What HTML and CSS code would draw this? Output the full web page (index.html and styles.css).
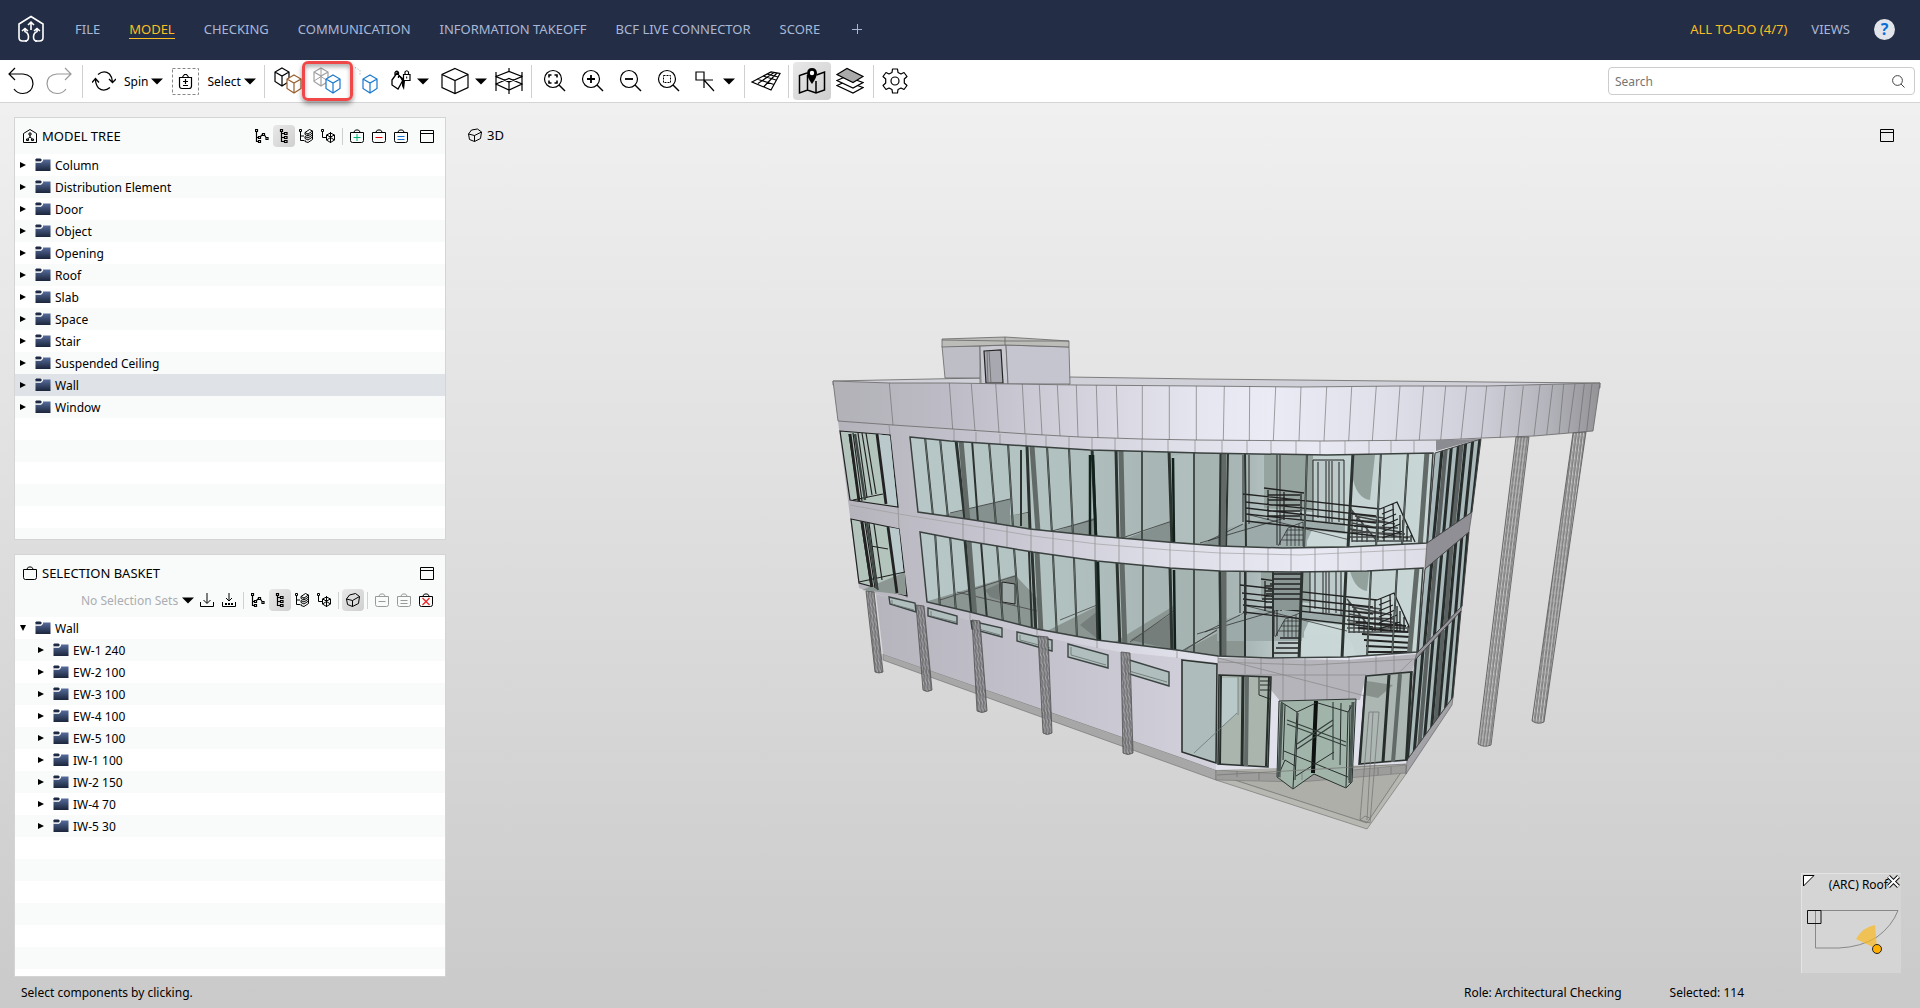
FILE: index.html
```html
<!DOCTYPE html>
<html lang="en">
<head>
    <meta charset="UTF-8">
    <meta name="viewport" content="width=device-width, initial-scale=1.0">
    <title>Model Viewer</title>
    <link rel="stylesheet" href="styles.css">
</head>
<body>
    <!-- Shared icons -->
    <svg class="sprite" aria-hidden="true">
        <defs>
            <linearGradient id="folderFill" x1="0" y1="0" x2="0" y2="1">
                <stop offset="0" stop-color="#566c9c"/>
                <stop offset="1" stop-color="#1b253b"/>
            </linearGradient>
        </defs>
        <symbol id="i-folder" viewBox="0 0 16 14">
            <path d="M.5 4.500H6.500L8 2.500V1.500H15.500V13H.5z" fill="url(#folderFill)"/>
            <path d="M.5 3.500V1.200L1.200.5H5.500L6.500 1.500V2.800L5.700 3.500z" fill="#1d2944"/>
            <path d="M.5 4.200H6L7.500 2.700V1" fill="none" stroke="#fff" stroke-width=".9"/>
        </symbol>
        <symbol id="i-right" viewBox="0 0 6 8"><path d="M0 1L6 4L0 7z"/></symbol>
        <symbol id="i-open" viewBox="0 0 6 8"><path d="M0 1H6L3 7z"/></symbol>
        <symbol id="i-caret" viewBox="0 0 12 7"><path d="M0 .5H12L6 6.500z"/></symbol>
        <symbol id="i-window" viewBox="0 0 14 14">
            <path d="M.5 1.500H13.500V13.500H.5zM.5 4.500H13.500" fill="none" stroke="#000"/>
        </symbol>
        <symbol id="i-tree1" viewBox="0 0 14 14">
            <path d="M1.500 3V12.500H4M1.500 8.500H4M5.500 7.500L7.500 5.500M9.500 6L11 8.500M.5.500h2v2h-2zM3.500 7.500h2v2h-2zM3.500 11.500h2v2h-2zM7.500 4.500h2v2h-2zM11 8.500h2v2h-2z" fill="none" stroke="#000" stroke-width="1.200"/>
        </symbol>
        <symbol id="i-tree2" viewBox="0 0 14 14">
            <path d="M4.500 3V12.500H7M4.500 4.500H7M4.500 8.500H7M3.500.500h2v2h-2zM7.500 3.500h2.500v2h-2.500zM7.500 7.500h2.500v2h-2.500zM7.500 11.500h2.500v2h-2.500z" fill="none" stroke="#000" stroke-width="1.200"/>
        </symbol>
        <symbol id="i-tree3" viewBox="0 0 14 14">
            <path d="M1.500 3V11.500H5M1.500 7H5M.5.500h2v2h-2zM6 3.500L10.500.5L13.500 2L9 5zM6 3.500V5.500L9 7L13.500 4V2M9 5V7M6 7.500L9 9L13.500 6V4M6 7.500V9.500L9 11L13.500 8V6M6 11V12.500L9 13.500L13.500 10.500V8" fill="none" stroke="#000"/>
        </symbol>
        <symbol id="i-tree4" viewBox="0 0 14 14">
            <path d="M1.500 3V8.500H5M.5.500h2v2h-2zM5.500 6L9.500 4L13.500 6V11L9.500 13.500L5.500 11zM5.500 6L9.500 8L13.500 6M9.500 3V14M5.500 11L9.500 8.500L13.500 11" fill="none" stroke="#000"/>
        </symbol>
        <symbol id="i-basket" viewBox="0 0 14 14">
            <path d="M.5 3.500H13.500V11.500Q13.500 13.500 11.500 13.500H2.500Q.5 13.500 .5 11.500zM3.500 3.500L5.500 1H8.500L10.500 3.500" fill="none" stroke="currentColor"/>
        </symbol>
        <symbol id="i-lens" viewBox="0 0 24 24">
            <circle cx="10" cy="10" r="8.500" fill="none" stroke="#000" stroke-width="1.200"/>
            <path d="M16 16L22 22" stroke="#000" stroke-width="1.400"/>
        </symbol>
        <symbol id="i-cube" viewBox="0 0 16 20">
            <path d="M8 1L15 5V14.500L8 19L1 14.500V5zM1 5L8 9L15 5M8 9V19" fill="none" stroke="currentColor" stroke-width="1.200"/>
        </symbol>
    </svg>

    <header class="menubar">
        <a href="#" class="logo" aria-label="Home">
            <svg width="28" height="28" viewBox="0 0 28 28" fill="none" stroke="#fff" stroke-width="1.600">
                <path d="M10 26H5.500Q2 26 2 22.500V9L14 1.500L26 9V22.500Q26 26 22.500 26H18"/>
                <path d="M14 8V15M11 10L14 7.200L17 10" />
                <path d="M8 13V16.500Q11.500 18 11.500 22Q11.500 26 8 26M5 16L8 13.500L11 16M20 13V16.500Q16.500 18 16.500 22Q16.500 26 20 26M17 16L20 13.500L23 16"/>
            </svg>
        </a>
        <nav class="menu">
            <a href="#">FILE</a>
            <a href="#" class="current">MODEL</a>
            <a href="#">CHECKING</a>
            <a href="#">COMMUNICATION</a>
            <a href="#">INFORMATION TAKEOFF</a>
            <a href="#">BCF LIVE CONNECTOR</a>
            <a href="#">SCORE</a>
        </nav>
        <button class="add-view" aria-label="Add layout">
            <svg width="10" height="10"><path d="M0 5.500H10M5.500 0V10" stroke="#a9b7d6"/></svg>
        </button>
        <nav class="menu menu-right">
            <a href="#" class="todo">ALL TO-DO (4/7)</a>
            <a href="#">VIEWS</a>
        </nav>
        <button class="help" aria-label="Help">?</button>
    </header>

    <div class="toolbar">
        <button class="tool" aria-label="Undo">
            <svg width="26" height="28" viewBox="0 0 26 28" fill="none" stroke="#000" stroke-width="1.200"><path d="M7 1L1 7L7 13M1 7H15Q25 8 25 17Q24 26 15 26.500Q9 26.500 6 22"/></svg>
        </button>
        <button class="tool" aria-label="Redo" disabled>
            <svg width="26" height="28" viewBox="0 0 26 28" fill="none" stroke="#999" stroke-width="1.200"><path d="M19 1L25 7L19 13M25 7H11Q1 8 1 17Q2 26 11 26.500Q17 26.500 20 22"/></svg>
        </button>
        <span class="sep"></span>
        <button class="tool-text">
            <svg width="24" height="24" viewBox="0 0 24 24" fill="none" stroke="#000" stroke-width="1.300"><path d="M6 5.500Q12 .5 17.500 5Q20.500 8.500 20.500 13M17 10L20.500 13.500L24 10M18 18.500Q12 23.500 6.500 19Q3.500 15.500 3.500 10M0 13.500L3.500 9.500L7 13.500"/></svg>
            <span>Spin</span>
            <svg width="12" height="7"><use href="#i-caret"/></svg>
        </button>
        <button class="tool-text">
            <svg width="27" height="27" viewBox="0 0 27 27" fill="none"><path d="M.5.500H26.500V26.500H.5z" stroke="#888" stroke-dasharray="3 2"/><path d="M7.500 9.500H19.500V18Q19.500 20.500 17 20.500H10Q7.500 20.500 7.500 18zM10.500 9L12.500 6.500H14.500L16.500 9M13.500 11V16M11 13.500H16M11 17.500H16" stroke="#000" stroke-width="1.200"/></svg>
            <span>Select</span>
            <svg width="12" height="7"><use href="#i-caret"/></svg>
        </button>
        <span class="sep"></span>
        <button class="tool cubes" aria-label="Show all">
            <svg width="30" height="28"><use href="#i-cube" x="1" y="0" width="16" height="20"/><path d="M14 13L21 7.500L29 12V23L21 28L14 23z" fill="#fff"/><use href="#i-cube" x="13" y="7" width="16" height="20" color="#9a5f2c"/></svg>
        </button>
        <button class="tool cubes marked" aria-label="Transparent">
            <svg width="30" height="28"><g color="#a0a0a0"><use href="#i-cube" x="1" y="0" width="16" height="20"/><path d="M9 1V10M2 14L9 9.500L16 14" fill="none" stroke="#a0a0a0"/></g><path d="M14 13L21 8L29 12V23L21 28L14 23z" fill="#fff"/><use href="#i-cube" x="13" y="7" width="16" height="20" color="#1878d0"/></svg>
        </button>
        <button class="tool cubes" aria-label="Show only selected">
            <svg width="30" height="28"><path d="M1 1L4 .5L9 3V9" fill="none" stroke="#999" stroke-dasharray="1 2"/><use href="#i-cube" x="11" y="7" width="16" height="20" color="#1878d0"/></svg>
        </button>
        <button class="tool-caret" aria-label="Colour">
            <svg width="20" height="24" viewBox="0 0 20 24"><path d="M1 11L6 4L12 11L7 20L1 16zM4 8V3.500Q5.500 1 7.500 3.500V9" fill="none" stroke="#000" stroke-width="1.300"/><path d="M8 6L12 9L14 12L13 21L11 17V12z"/><path d="M12.500 5.500H19V11.500H12.500zM14 5V3Q15.700.500 17.500 3V5" fill="#fff" stroke="#000" stroke-width="1.200"/><path d="M15.700 7.500V9.500" stroke="#000"/></svg>
            <svg width="12" height="7"><use href="#i-caret"/></svg>
        </button>
        <button class="tool-caret view-dir" aria-label="View direction">
            <svg width="28" height="28" viewBox="0 0 28 28" fill="none" stroke="#000" stroke-width="1.200"><path d="M14 1.500L27 7.500V20.500L14 26.500L1 20.500V7.500zM1 7.500L14 13.500L27 7.500M14 13.500V26.500"/></svg>
            <svg width="12" height="7"><use href="#i-caret"/></svg>
        </button>
        <button class="tool grid-tool" aria-label="Sectioning">
            <svg width="28" height="28" viewBox="0 0 28 28" fill="none" stroke="#000" stroke-width="1.200"><path d="M1 5V24M27 5V24M14 1V5M14 14V27M1 9.500L14 4.500L27 9.500L14 15zM1 17L14 11.500L27 17L14 23z"/></svg>
        </button>
        <span class="sep"></span>
        <button class="tool" aria-label="Zoom to fit">
            <svg width="24" height="24"><use href="#i-lens"/><path d="M6 8.500V6H8.500M11.500 6H14V8.500M14 11.500V14H11.500M8.500 14H6V11.500" fill="none" stroke="#000" stroke-width="1.600"/></svg>
        </button>
        <button class="tool" aria-label="Zoom in">
            <svg width="24" height="24"><use href="#i-lens"/><path d="M6 10H14M10 6V14" stroke="#000" stroke-width="1.800"/></svg>
        </button>
        <button class="tool" aria-label="Zoom out">
            <svg width="24" height="24"><use href="#i-lens"/><path d="M6 10H14" stroke="#000" stroke-width="1.800"/></svg>
        </button>
        <button class="tool" aria-label="Zoom to area">
            <svg width="24" height="24"><use href="#i-lens"/><path d="M6.500 6.500H13.500V13.500H6.500z" fill="none" stroke="#000" stroke-dasharray="2 1"/></svg>
        </button>
        <button class="tool-caret" aria-label="Snap">
            <svg width="24" height="22" viewBox="0 0 24 22" fill="none" stroke="#000" stroke-width="1.200"><path d="M3 2H11V10H3zM3 10H20M11 2V18M11 10L21 21"/></svg>
            <svg width="12" height="7"><use href="#i-caret"/></svg>
        </button>
        <span class="sep"></span>
        <button class="tool grid-tool" aria-label="Grid">
            <svg width="30" height="20" viewBox="0 0 30 20" fill="none" stroke="#000" stroke-width="1.200"><path d="M1 11L20 1L29 2.500L20 19zM6 8L23 13.500M12 5L25 9M16 3L27 6M7 12.500L23 1.500M13 15.500L26 2"/></svg>
        </button>
        <span class="sep"></span>
        <button class="tool active" aria-label="Map">
            <svg width="28" height="28" viewBox="0 0 28 28" fill="none" stroke="#000" stroke-width="1.500"><path d="M9 6L1.500 8.500V26L9.500 23L18 26L26.500 23V5L18.500 8M9.500 8V23M18 14V26"/><path d="M14 17Q9 10 9 6Q9.500 1 14 1Q18.500 1 19 6Q19 10 14 17z" fill="#000" stroke="none"/><circle cx="14" cy="6" r="2.200" fill="#fff" stroke="none"/></svg>
        </button>
        <button class="tool" aria-label="Floors">
            <svg width="28" height="28" viewBox="0 0 28 28" fill="#fff" stroke="#000" stroke-width="1.200"><path d="M1 18.500L10 14.500L27 20.500L17 26z"/><path d="M1 13.500L10 9.500L27 15.500L17 21z"/><path d="M1 7.500L11 1.500L27 9.500L17 15.500z" fill="#aaa"/></svg>
        </button>
        <span class="sep"></span>
        <button class="tool grid-tool" aria-label="Settings">
            <svg width="26" height="26" viewBox="0 0 26 26" fill="none" stroke="#000" stroke-width="1.200"><path d="M10.500 1H15.500L16 4.500L19 6L22 4.500L25 8.500L22.300 11V15L25 17.500L22 21.500L19 20L16 21.500L15.500 25H10.500L10 21.500L7 20L4 21.500L1 17.500L3.700 15V11L1 8.500L4 4.500L7 6L10 4.500z" stroke-linejoin="round"/><circle cx="13" cy="13" r="4"/></svg>
        </button>
        <div class="search">
            <input type="search" id="search" placeholder="Search" aria-label="Search">
            <label for="search" aria-hidden="true">
                <svg width="13" height="13" viewBox="0 0 13 13" fill="none" stroke="#444"><circle cx="5.500" cy="5.500" r="4.900"/><path d="M9 9L12.500 12.500"/></svg>
            </label>
        </div>
    </div>

    <main class="workspace">
        <aside class="sidebar">
            <section class="panel">
                <div class="panel-head">
                    <svg width="14" height="14" viewBox="0 0 14 14" fill="none" stroke="#000"><path d="M.5 4.500L7 .500L13.500 4.500V13.500H.5zM6 4h2v2h-2zM3.500 10h2v1.500h-2zM8.500 10h2v1.500h-2zM7 6V8L4.500 10M7 8L9.500 10"/></svg>
                    <h2>MODEL TREE</h2>
                    <div class="panel-tools">
                        <button class="mini" aria-label="Containment"><svg><use href="#i-tree1"/></svg></button>
                        <button class="mini active" aria-label="Type"><svg><use href="#i-tree2"/></svg></button>
                        <button class="mini" aria-label="Layer"><svg><use href="#i-tree3"/></svg></button>
                        <button class="mini" aria-label="Component"><svg><use href="#i-tree4"/></svg></button>
                        <span class="mini-sep"></span>
                        <button class="mini" aria-label="Add to basket"><svg><use href="#i-basket"/><path d="M7 5V12M3.500 8.500H10.500" stroke="#00b070"/></svg></button>
                        <button class="mini" aria-label="Remove from basket"><svg><use href="#i-basket"/><path d="M3.500 8.500H10.500" stroke="#e00000"/></svg></button>
                        <button class="mini" aria-label="Set basket"><svg><use href="#i-basket"/><path d="M3.500 7.500H10.500M3.500 10.500H10.500" stroke="#1070d0"/></svg></button>
                        <button class="mini maximize" aria-label="Maximize"><svg><use href="#i-window"/></svg></button>
                    </div>
                </div>
                <ul class="tree">
                    <li><button aria-label="Expand"><svg><use href="#i-right"/></svg></button><svg class="folder"><use href="#i-folder"/></svg>Column</li>
                    <li><button aria-label="Expand"><svg><use href="#i-right"/></svg></button><svg class="folder"><use href="#i-folder"/></svg>Distribution Element</li>
                    <li><button aria-label="Expand"><svg><use href="#i-right"/></svg></button><svg class="folder"><use href="#i-folder"/></svg>Door</li>
                    <li><button aria-label="Expand"><svg><use href="#i-right"/></svg></button><svg class="folder"><use href="#i-folder"/></svg>Object</li>
                    <li><button aria-label="Expand"><svg><use href="#i-right"/></svg></button><svg class="folder"><use href="#i-folder"/></svg>Opening</li>
                    <li><button aria-label="Expand"><svg><use href="#i-right"/></svg></button><svg class="folder"><use href="#i-folder"/></svg>Roof</li>
                    <li><button aria-label="Expand"><svg><use href="#i-right"/></svg></button><svg class="folder"><use href="#i-folder"/></svg>Slab</li>
                    <li><button aria-label="Expand"><svg><use href="#i-right"/></svg></button><svg class="folder"><use href="#i-folder"/></svg>Space</li>
                    <li><button aria-label="Expand"><svg><use href="#i-right"/></svg></button><svg class="folder"><use href="#i-folder"/></svg>Stair</li>
                    <li><button aria-label="Expand"><svg><use href="#i-right"/></svg></button><svg class="folder"><use href="#i-folder"/></svg>Suspended Ceiling</li>
                    <li class="selected"><button aria-label="Expand"><svg><use href="#i-right"/></svg></button><svg class="folder"><use href="#i-folder"/></svg>Wall</li>
                    <li><button aria-label="Expand"><svg><use href="#i-right"/></svg></button><svg class="folder"><use href="#i-folder"/></svg>Window</li>
                </ul>
            </section>

            <section class="panel">
                <div class="panel-head basket-head">
                    <svg width="14" height="14"><use href="#i-basket"/></svg>
                    <h2>SELECTION BASKET</h2>
                    <div class="panel-tools">
                        <button class="mini maximize" aria-label="Maximize"><svg><use href="#i-window"/></svg></button>
                    </div>
                </div>
                <div class="basket-tools">
                    <select aria-label="Selection sets"><option>No Selection Sets</option></select>
                    <svg class="set-caret"><use href="#i-caret"/></svg>
                    <button class="mini" aria-label="Load set"><svg fill="none" stroke="#000"><path d="M.5 9V13.500H13.500V9M7 0V10M3.500 7L7 10.500L10.500 7"/></svg></button>
                    <button class="mini" aria-label="Save set"><svg fill="none" stroke="#000"><path d="M.5 9V13.500H13.500V9M7 0V8M4 5L7 8L10 5"/><path d="M3 11H11" stroke-width="2" stroke-dasharray="2 1"/></svg></button>
                    <span class="mini-sep"></span>
                    <button class="mini" aria-label="Containment"><svg><use href="#i-tree1"/></svg></button>
                    <button class="mini active" aria-label="Type"><svg><use href="#i-tree2"/></svg></button>
                    <button class="mini" aria-label="Layer"><svg><use href="#i-tree3"/></svg></button>
                    <button class="mini" aria-label="Component"><svg><use href="#i-tree4"/></svg></button>
                    <span class="mini-sep"></span>
                    <button class="mini active" aria-label="Show in 3D"><svg fill="none" stroke="#000"><path d="M.5 6L3.500 2L9.500.5L13.500 3.500L12.500 10.500L6.500 13.500L1.500 11.500zM.5 6L6.500 7.500L13.500 3.500M6.500 7.500V13.500"/></svg></button>
                    <span class="mini-sep"></span>
                    <button class="mini" aria-label="Remove" disabled><svg><use href="#i-basket"/><path d="M3.500 8.500H10.500" stroke="#999"/></svg></button>
                    <button class="mini" aria-label="Set" disabled><svg><use href="#i-basket"/><path d="M3.500 7.500H10.500M3.500 10.500H10.500" stroke="#999"/></svg></button>
                    <button class="mini" aria-label="Clear"><svg><use href="#i-basket"/><path d="M3.500 5L10.500 12M10.500 5L3.500 12" stroke="#f02020" stroke-width="1.200"/></svg></button>
                </div>
                <ul class="tree">
                    <li><button aria-label="Collapse"><svg><use href="#i-open"/></svg></button><svg class="folder"><use href="#i-folder"/></svg>Wall</li>
                    <li class="child"><button aria-label="Expand"><svg><use href="#i-right"/></svg></button><svg class="folder"><use href="#i-folder"/></svg>EW-1 240</li>
                    <li class="child"><button aria-label="Expand"><svg><use href="#i-right"/></svg></button><svg class="folder"><use href="#i-folder"/></svg>EW-2 100</li>
                    <li class="child"><button aria-label="Expand"><svg><use href="#i-right"/></svg></button><svg class="folder"><use href="#i-folder"/></svg>EW-3 100</li>
                    <li class="child"><button aria-label="Expand"><svg><use href="#i-right"/></svg></button><svg class="folder"><use href="#i-folder"/></svg>EW-4 100</li>
                    <li class="child"><button aria-label="Expand"><svg><use href="#i-right"/></svg></button><svg class="folder"><use href="#i-folder"/></svg>EW-5 100</li>
                    <li class="child"><button aria-label="Expand"><svg><use href="#i-right"/></svg></button><svg class="folder"><use href="#i-folder"/></svg>IW-1 100</li>
                    <li class="child"><button aria-label="Expand"><svg><use href="#i-right"/></svg></button><svg class="folder"><use href="#i-folder"/></svg>IW-2 150</li>
                    <li class="child"><button aria-label="Expand"><svg><use href="#i-right"/></svg></button><svg class="folder"><use href="#i-folder"/></svg>IW-4 70</li>
                    <li class="child"><button aria-label="Expand"><svg><use href="#i-right"/></svg></button><svg class="folder"><use href="#i-folder"/></svg>IW-5 30</li>
                </ul>
            </section>
        </aside>

        <section class="viewport">
            <svg class="building" viewBox="446 103 1474 874" role="img" aria-label="3D model of the building">
                <defs>
                    <linearGradient id="parapet" gradientUnits="userSpaceOnUse" x1="833" y1="0" x2="1600" y2="0">
                        <stop offset="0" stop-color="#b1b1b7"/><stop offset=".15" stop-color="#bdbcc6"/>
                        <stop offset=".32" stop-color="#d3d2dc"/><stop offset=".48" stop-color="#e6e6f0"/>
                        <stop offset=".57" stop-color="#ebebf5"/><stop offset=".72" stop-color="#e0e0ea"/>
                        <stop offset=".85" stop-color="#cdcdd7"/><stop offset=".93" stop-color="#b4b4bc"/>
                        <stop offset="1" stop-color="#939397"/>
                    </linearGradient>
                    <linearGradient id="body" gradientUnits="userSpaceOnUse" x1="838" y1="0" x2="1436" y2="0">
                        <stop offset="0" stop-color="#b4b3bb"/><stop offset=".3" stop-color="#c9c8d3"/>
                        <stop offset=".55" stop-color="#dedee8"/><stop offset=".8" stop-color="#e9e9f3"/>
                        <stop offset="1" stop-color="#dcdce6"/>
                    </linearGradient>
                    <linearGradient id="lower" gradientUnits="userSpaceOnUse" x1="876" y1="0" x2="1218" y2="0">
                        <stop offset="0" stop-color="#b6b5be"/><stop offset="1" stop-color="#d2d1dc"/>
                    </linearGradient>
                    <linearGradient id="glass" gradientUnits="userSpaceOnUse" x1="910" y1="0" x2="1430" y2="0">
                        <stop offset="0" stop-color="#b8c8c8"/><stop offset=".3" stop-color="#b1c1bf"/>
                        <stop offset=".55" stop-color="#a4b2b0"/><stop offset=".65" stop-color="#a9b8b6"/>
                        <stop offset=".75" stop-color="#c3d1d1"/><stop offset="1" stop-color="#c8d6d6"/>
                    </linearGradient>
                    <pattern id="mesh" width="3" height="8" patternUnits="userSpaceOnUse" patternTransform="rotate(7)">
                        <rect width="3" height="8" fill="#c4c4c4"/><path d="M.5 0V8M2 0L3 8" stroke="#555" stroke-width=".6"/>
                    </pattern>
                    <pattern id="meshLeft" width="3" height="8" patternUnits="userSpaceOnUse" patternTransform="rotate(-5)">
                        <rect width="3" height="8" fill="#a3a3a8"/><path d="M.5 0V8M1 0L3 8" stroke="#444" stroke-width=".6"/>
                    </pattern>
                    <clipPath id="upperGlass"><path d="M910 437L950 441L1027 446L1090 450L1167 452L1200 453L1327 455L1433 453L1427 543L1347 547L1283 548L1220 546L1167 542L1097 536L1030 529L967 519L918 512z"/></clipPath>
                    <clipPath id="midGlass"><path d="M920 532L967 541L1033 552L1097 561L1170 568L1220 571L1293 572L1367 571L1423 568L1417 652L1347 657L1270 658L1218 656L1177 650L1097 640L1037 629L970 612L927 602z"/></clipPath>
                    <clipPath id="side1"><path d="M1435 453L1481 439L1472 512L1427 543z"/></clipPath>
                    <clipPath id="side2"><path d="M1425 569L1469 532L1462 606L1417 653z"/></clipPath>
                    <clipPath id="side3"><path d="M1415 660L1461 611L1453 697L1407 760z"/></clipPath>
                    <!-- Stair and railings seen through the glass, one per floor -->
                    <g id="stair" fill="none" stroke="#222" stroke-width="1">
                        <path d="M1264 455H1313V512L1264 508z" fill="#96a4a0" stroke="none"/>
                        <path d="M1353 455H1375L1370 500Q1356 498 1352 475z" fill="#93a19d" stroke="none"/>
                        <path d="M1220 530L1290 512L1345 522L1345 550H1220z" fill="#9cabaa" stroke="none"/>
                        <path d="M1307 541L1312 530L1345 534V546H1307z" fill="#cad8d8" stroke="none"/>
                        <path d="M1315 460H1344V523L1313 520z" fill="#bccac9" stroke="none"/>
                        <path d="M1243 455V522M1249 455V524M1277 455V545M1280 455V545M1313 522V460H1344V524M1329 461V522M1318 462V518M1339 462V522M1326 461V522M1332 461V522"/>
                        <path d="M1243 494L1380 509M1245 502L1376 516M1246 508L1376 523M1246 514L1376 528M1246 521L1376 536M1264 488L1304 493M1268 490V520M1301 492V520M1268 495H1300M1268 500H1300M1268 505H1300M1268 511H1300M1268 516H1300M1284 490V520" stroke-width="1.300"/>
                        <path d="M1380 509L1397 502L1415 542M1382 514L1394 509M1382 520L1396 514M1382 526L1398 519M1382 532L1400 524M1382 538L1403 531M1378 508V540M1384 508V541M1393 504L1394 540M1400 515V540M1407 526V541M1403 520V541M1411 535V542" stroke-width="1.300"/>
                        <path d="M1350 508L1376 540M1352 514L1384 518M1352 520L1390 523M1354 526L1398 528M1352 532L1405 534M1350 537H1410M1352 541H1410M1350 529L1408 538M1355 516L1395 524M1352 523L1400 532M1352 510V542M1357 516V542M1362 521V542M1367 527V542" stroke-width="1.400" stroke-opacity=".8"/>
                        <path d="M1278 546L1288 528L1303 522V546M1282 540H1303M1284 535H1303M1287 530H1303M1287 530V546M1291 527V546M1295 526V546M1299 524V546M1200 543L1285 518M1208 541L1243 524M1250 515L1350 540" stroke-width=".7"/>
                    </g>
                </defs>

                <!-- Penthouse -->
                <g stroke="#666" stroke-width=".8">
                    <path d="M833 381L980 378V385H833zM1069 377L1200 379L1487 382L1600 383V388H1069z" fill="#d0d0d8"/>
                    <path d="M942 346L980 346V378L945 378z" fill="#bebec6"/>
                    <path d="M980 346L1006 345L1008 384H981z" fill="#c9c9d2"/>
                    <path d="M1006 345L1069 347L1070 384H1008z" fill="#c5c5cf"/>
                    <path d="M942 339L1005 337L1069 341V347L1006 345L942 347z" fill="#bcbcb9"/>
                    <path d="M984 351L1001 350L1003 383H986z" fill="#a8a8b0" stroke="#222" stroke-width="1.200"/>
                    <path d="M942 340L1005 341L1069 341M1005 337V345M987 351L988 383M989 351L991 383" fill="none"/>
                </g>

                <!-- Terrace and foundation -->
                <path d="M1216 774L1367 823L1406 765L1360 750H1216z" fill="#afafaa" stroke="#777" stroke-width=".7"/>
                <path d="M1216 774V780L1367 829L1406 774V765L1367 823z" fill="#b8b8b2" stroke="#777" stroke-width=".7"/>
                <path d="M883 654L1180 757L1216 770V780L883 660z" fill="#a7a7a7" stroke="#777" stroke-width=".7"/>
                <path d="M1216 770L1300 775L1406 765V773L1300 782L1216 780z" fill="#9d9d9c" stroke="#777" stroke-width=".6"/>

                <!-- Walls -->
                <path d="M838 421L893 425L953 429L1027 434L1080 437L1196 440H1436L1435 453L1423 569L1415 660L1217 663L1180 658L1120 652L1053 639L970 620L886 597L859 588z" fill="url(#body)"/>
                <path d="M876 594L970 620L1053 639L1120 652L1180 658L1218 663L1216 770L1180 757L883 654z" fill="url(#lower)"/>
                <path d="M1217 661L1415 659L1407 764L1216 770z" fill="#e1e1ec"/>
                <path d="M1218 658L1347 660L1417 654L1412 672L1366 676L1360 700L1280 701L1271 690V677L1218 675z" fill="#b4b4ba"/>
                <path d="M833 381L890 383L950 383L1077 385L1196 386L1301 387L1400 386L1487 386L1600 383L1593 431L1534 436L1483 438L1440 440L1323 441L1196 440L1142 439L1080 437L1027 434L953 429L893 425L838 421z" fill="url(#parapet)" stroke="#666" stroke-width=".8"/>
                <path d="M889.300 383L893 425M949.300 383L952.700 429M971.300 384L975 431M995.700 384L999 433M1022.300 384L1025 434M1039.300 385L1042 435M1057.300 385L1060 436M1076.300 385L1078 437M1096.300 385L1098 438M1116.300 386L1118 438M1142.300 386V439M1169.300 386V440M1196.300 386V440M1224.300 386L1223.300 440M1249.700 386L1249.300 441M1275.700 387L1273.300 441M1301 387L1299 441M1326.700 387L1324 441M1351.700 387L1348.700 441M1376.300 386L1372.300 441M1400 386L1396 441M1423.700 386L1419.300 440M1445.700 386L1440.700 440M1466.700 386L1461 439M1486.700 386L1481.300 438M1505.300 386L1500 438M1523.300 386L1517.700 437M1540 385L1534 436M1552.700 385L1546.700 435M1563.700 384L1559 434M1575 384L1568.300 433M1584.300 384L1578.700 432M1592 384L1586.700 431" stroke="#666" stroke-width=".6"/>
                <!-- Panel joints under the parapet and between floors -->
                <path d="M889 425L898 507L899 529L907 598M954 430V441M976 432V442M1000 434V444M1026 435V446M1046 436V448M1069 437V449M1092 438V450M1115 438V451M1142 439V452M1168 440V453M1195 440V454M1222 441V454M1247 441V455M1271 441V455M1296 441V455M1320 441V454M1345 441V454M1369 441V454M1391 441V453M1414 441V453M963 519V541M984 522V543M1007 525V548M1031 529V551M1053 531V556M1073 534V558M1095 536V560M1119 538V563M1143 540V566M1170 542V568M1194 544V570M1220 546V571M1244 547V571M1268 547V572M1291 548V572M1315 548V572M1338 547V572M1361 546V571M1383 546V570M1405 545V569M970 612V620M1037 629V636M1097 640V648M1177 650V658M1218 656V663M1245 658V674M1261 658V674M1283 658V701M1305 658V700M1327 658V700M1349 657V699M1376 656V674M1394 655V673M1218 662L1310 665L1415 659M1218 675H1290L1366 675M1218 658L1373 698L1412 660" fill="none" stroke="#888" stroke-width=".7"/>
                <path d="M850 505L899 514L967 525L1033 536L1097 544L1170 550L1220 553L1300 555L1426 549" fill="none" stroke="#999" stroke-width=".6"/>
                <path d="M1436 440L1480 439L1436 451z" fill="#8b8b92"/>

                <!-- Left end windows -->
                <g fill="#b3c4bd" stroke="#222" stroke-width="1.200">
                    <path d="M840 431L890 435L898 507L850 500z"/>
                    <path d="M851 519L899 529L907 596L859 583z"/>
                    <path d="M877 434L890 436L897 506L885 503zM888 527L899 529L906 595L896 592z" fill="#bac9cc" stroke="none"/>
                    <path d="M862 590L905 572L906 595zM870 580L905 572" fill="#8c9793" stroke="none"/>
                    <path d="M849 434L859 501M853 433L862 501M862 433L872 495M866 433L876 494M858 433L867 498M861 521L871 587M869 523L878 590M865 522L875 588M874 524L882 580M853 500L883 494M859 582L905 572M871 546L888 549" fill="none"/>
                    <path d="M850 434L859 501M877 434L886 504M862 522L872 587M888 527L897 593" fill="none" stroke-width="2.800"/>
                    <path d="M855 434L865 500M867 523L877 589" fill="none" stroke="#3f4745" stroke-width="2.500"/>
                </g>

                <!-- Upper floor glazing -->
                <g clip-path="url(#upperGlass)">
                    <path d="M905 430H1440V560H905z" fill="url(#glass)"/>
                    <path d="M940 516L1010 499V530H940zM1045 535L1096 517V545H1045zM1122 540L1175 520V550H1122zM1200 545L1245 524V550H1200z" fill="#85918e"/>
                    <path d="M950 513L1010 499M1052 531L1096 519M1125 537L1175 520M1012 516L1030 512" stroke="#333" stroke-width=".8"/>
                    <path d="M1010 515L1030 513V530H1010z" fill="#98a6a2"/>
                    <path d="M1172 456L1195 452V542H1172z" fill="#b0bfbd"/>
                    <use href="#stair"/>
                    <g stroke="#2b322f" stroke-width="2">
                        <path d="M925 437L933 516M940 438L948 518M972 440L978 522M989 442L996 525M1008 443L1013 528M1047 446L1052 534M1069 448L1073 536M1142 452V542M1194 452V548M1228 452L1226 550M1307 452L1304 550M1381 452L1376 548M1408 452L1402 546M1245 452L1246 550M1021 450V526"/>
                        <path d="M956 440L965 520M1027 446L1030 530M1092 448L1096 540M1116 450L1118 540M1169 450L1172 545M1221 452L1220 550M1353 452L1348 548" stroke-width="3"/>
                        <path d="M1093 455L1096 537M1173 458L1174 543M1090 455V536" stroke="#10201a" stroke-width="2.500"/>
                    </g>
                    <path d="M961 440L968 522M1032 446L1038 532M1121 451L1123 542M1224 452L1223 550M1427 452L1420 548" stroke="#626a68" stroke-width="5"/>
                    <path d="M925 437L933 516M940 438L948 518M1069 448L1073 536M1008 443L1013 528M1142 452V542M1194 452V548M1307 452L1304 550M1381 452L1376 548M1408 452L1402 546M989 442L996 525M1047 446L1052 534" stroke="#77817e" stroke-width=".7"/>
                </g>
                <path d="M910 437L950 441L1027 446L1090 450L1167 452L1200 453L1327 455L1433 453L1427 543L1347 547L1283 548L1220 546L1167 542L1097 536L1030 529L967 519L918 512z" fill="none" stroke="#3a413f" stroke-width="1.500"/>

                <!-- Middle floor glazing -->
                <g clip-path="url(#midGlass)">
                    <path d="M905 525H1440V670H905z" fill="url(#glass)"/>
                    <path d="M928 601L1015 575L1037 598V632H928zM1045 632L1099 605V645H1045zM1110 645L1175 605V655H1110zM1182 652L1245 618V660H1182z" fill="#8b9693"/>
                    <path d="M985 590L1015 576V605L990 597zM1080 625L1099 610V640zM1130 640L1175 612V650z" fill="#757e7b"/>
                    <path d="M1002 582L1015 584V604L1002 602z" fill="#a0aaa8" stroke="#222"/>
                    <path d="M957 592L1037 611M1060 620L1097 605M1130 642L1175 610M1185 650L1245 612M940 600L1015 576M1180 652L1240 617" stroke="#444" stroke-width=".8"/>
                    <use href="#stair" x="-3" y="91"/>
                    <path d="M1272 572H1302V610H1272z" fill="#8a9694"/>
                    <path d="M1272 574H1302M1272 579H1302M1270 584H1302M1268 589H1302M1266 594H1302M1262 599H1300M1280 638H1300M1278 643H1300M1276 648H1300M1274 653H1300" stroke="#222" stroke-width="1.300"/>
                    <path d="M1302 638Q1330 628 1350 640L1358 658H1302z" fill="#c9d7d7"/>
                    <path d="M1356 622L1406 626M1358 628L1408 632M1362 634L1410 637M1364 640L1412 643M1366 646L1412 648M1368 652H1412" stroke="#222" stroke-width="1.800"/>
                    <g stroke="#2b322f" stroke-width="2">
                        <path d="M935 532L940 608M950 535L956 612M981 542L987 620M997 545L1003 624M1014 548L1020 628M1053 555L1057 638M1074 558L1077 640M1143 564V650M1194 569V656M1273 570V660M1371 570L1367 658M1397 570L1392 658M1245 570V660M1029 552L1032 632"/>
                        <path d="M965 540L972 616M1032 551L1036 634M1096 560L1098 645M1117 562L1120 648M1170 567L1172 655M1220 570L1221 660M1346 570L1342 658M1302 570L1299 660" stroke-width="3"/>
                        <path d="M1098 562L1100 640M1174 570L1175 650" stroke="#10201a" stroke-width="2.500"/>
                    </g>
                    <path d="M969 541L975 618M1037 552L1041 634M1122 562L1125 648M1224 570V660M1417 568L1409 658" stroke="#626a68" stroke-width="5"/>
                    <path d="M935 532L940 608M950 535L956 612M997 545L1003 624M1014 548L1020 628M1053 555L1057 638M1074 558L1077 640M1143 564V650M1194 569V656M1371 570L1367 658M1397 570L1392 658" stroke="#77817e" stroke-width=".7"/>
                </g>
                <path d="M920 532L967 541L1033 552L1097 561L1170 568L1220 571L1293 572L1367 571L1423 568L1417 652L1347 657L1270 658L1218 656L1177 650L1097 640L1037 629L970 612L927 602z" fill="none" stroke="#3a413f" stroke-width="1.500"/>

                <!-- Right facade -->
                <path d="M1427 543L1472 512L1469 532L1425 569z" fill="#918f96" stroke="#555" stroke-width=".7"/>
                <path d="M1417 652L1462 605L1461 612L1415 660z" fill="#96949b" stroke="#555" stroke-width=".7"/>
                <path d="M1407 760L1453 697L1452 705L1406 774z" fill="#a3a2a6" stroke="#666" stroke-width=".7"/>
                <g clip-path="url(#side1)">
                    <path d="M1420 430H1490V550H1420z" fill="#a9b8ba"/>
                    <path d="M1434 450L1426 550M1442 450L1433 545M1452 440L1443 540M1459 440L1450 535M1466 440L1457 530M1473 438L1464 528M1480 438L1471 520" stroke="#262d2b" stroke-width="3"/>
                    <path d="M1446 446L1437 545M1462 440L1453 530" stroke="#5a6060" stroke-width="4"/>
                </g>
                <g clip-path="url(#side2)">
                    <path d="M1410 525H1480V660H1410z" fill="#a9b8ba"/>
                    <path d="M1424 565L1417 655M1432 560L1424 650M1442 550L1434 640M1449 545L1441 635M1456 540L1448 630M1462 535L1455 620M1468 530L1461 615" stroke="#262d2b" stroke-width="3"/>
                    <path d="M1436 556L1428 646M1452 540L1445 630" stroke="#5a6060" stroke-width="4"/>
                </g>
                <g clip-path="url(#side3)">
                    <path d="M1400 605H1470V770H1400z" fill="#a9b8b8"/>
                    <path d="M1416 655L1407 765M1423 650L1414 755M1433 640L1424 745M1440 630L1431 735M1447 625L1438 725M1454 615L1445 715M1460 610L1452 705" stroke="#262d2b" stroke-width="3"/>
                    <path d="M1428 642L1419 750M1443 630L1435 730" stroke="#5a6060" stroke-width="4"/>
                </g>
                <path d="M1435 453L1481 439L1472 512L1427 543zM1425 569L1469 532L1462 606L1417 653zM1415 660L1461 611L1453 697L1407 760z" fill="none" stroke="#444"/>

                <!-- Basement strip windows -->
                <path d="M889 597L915 603L916 612L890 604zM928 608L957 616V624L928 616zM971 621L1002 628V637L972 629zM1017 632L1052 640V651L1017 641zM1068 644L1108 655V668L1068 657zM1126 659L1169 672V686L1126 673z" fill="#b0bebd" stroke="#3c4543" stroke-width="1.400"/>
                <path d="M892 600V604L914 610M931 611V616L956 622M975 624V628L1000 635M1020 635V640L1050 648M1071 647V655L1106 665M1129 663V671L1167 682" fill="none" stroke="#67716f" stroke-width=".8"/>

                <!-- Entrance level -->
                <g stroke="#2b322f" stroke-width="1.600">
                    <path d="M1182 660L1217 664L1216 763L1182 752z" fill="#aebdbb"/>
                    <path d="M1219 675L1271 677L1268 767L1218 764z" fill="#aab6ad"/>
                    <path d="M1366 676L1412 672L1407 760L1359 764z" fill="#acb6b2"/>
                    <path d="M1279 701L1356 699L1352 782L1346 788L1314 774L1293 789L1277 777z" fill="#a1b4aa" stroke-width="1"/>
                </g>
                <path d="M1221 678H1238V713L1220 728z" fill="#b9c8c8"/>
                <path d="M1367 681L1393 685L1378 698L1364 695z" fill="#89918c"/>
                <g fill="none" stroke="#262d2b">
                    <path d="M1243 676L1242 766M1389 675L1383 762" stroke-width="3"/>
                    <path d="M1247 677L1246 766M1400 674L1393 762" stroke="#626a68" stroke-width="4"/>
                    <path d="M1221 676L1220 764M1269 677L1266 766M1366 677L1360 763M1411 673L1406 760" stroke-width="2"/>
                    <path d="M1259 677V695L1270 699M1260 681H1270M1260 685H1270M1260 690H1270"/>
                    <path d="M1316 701L1313 773" stroke="#0c100e" stroke-width="4"/>
                    <path d="M1281 702L1297 712L1293 788M1278 776L1285 760L1295 766M1297 712L1316 703M1354 702L1348 712L1346 787M1348 712L1318 703M1285 705L1283 760M1350 705L1349 780M1298 713L1295 780M1333 702V760M1341 703L1340 765M1284 751L1348 777M1296 776L1334 752"/>
                    <path d="M1282 703L1279 777M1353 702L1350 783" stroke="#4a5651" stroke-width="3"/>
                    <path d="M1287 720L1346 742M1287 724L1346 746M1297 744L1333 720M1297 749L1333 725" stroke="#33413a" stroke-width="1.300"/>
                    <path d="M1194 753L1237 713M1238 677V715" stroke="#6a7778" stroke-width=".8"/>
                </g>
                <path d="M1369 712L1360 820L1370 823L1379 712zM1373 712L1367 820M1360 820L1365 816L1370 818M1217 775L1406 764M1237 771V777M1259 772V780M1280 774V780M1302 773V780M1378 768V775M1391 767V774" fill="none" stroke="#777" stroke-width=".8"/>

                <!-- Columns -->
                <g fill="url(#meshLeft)" stroke="#444" stroke-width=".8" opacity=".9">
                    <path d="M866 591L874 592L883 672Q879 674 875 672z"/>
                    <path d="M916 605L924 606L932 690Q927 693 923 690z"/>
                    <path d="M972 620L980 621L987 711Q982 714 977 711z"/>
                    <path d="M1038 636L1048 637L1052 733Q1047 736 1043 733z"/>
                    <path d="M1121 652L1130 653L1133 753Q1128 756 1123 753z"/>
                </g>
                <g fill="url(#mesh)" stroke="#555" stroke-width=".8">
                    <path d="M1516 437L1529 437L1491 745Q1484 748 1478 744z"/>
                    <path d="M1573 433L1586 432L1544 722Q1538 725 1532 721z"/>
                </g>
            </svg>
            <div class="viewport-head">
                <svg width="14" height="14" fill="none" stroke="#000"><path d="M.5 6L3.500 2L9.500 1L13.500 4L12.500 10.500L6.500 13.500L1.500 11.500zM.5 6L6.500 7.500L13.500 4M6.500 7.500V13.500"/></svg>
                <h2>3D</h2>
                <button class="mini maximize" aria-label="Maximize"><svg><use href="#i-window"/></svg></button>
            </div>
            <div class="minimap">
                <svg width="100" height="100" viewBox="0 0 100 100" fill="none">
                    <path d="M1.500 1.500H12L1.500 12z" fill="#fff" stroke="#000"/>
                    <path d="M13 36.500H96Q90 52 75 63Q59 73 37 74H13.500V36.500" stroke="#888"/>
                    <path d="M5.500 36.500H19V49.500H5.500z" stroke="#111"/>
                    <path d="M75 75L54 65Q61 53 73 51z" fill="#fbb81c" opacity=".7"/>
                    <circle cx="75" cy="75" r="4.500" fill="#ffb000" stroke="#222"/>
                </svg>
                <span>(ARC) Roof</span>
                <button aria-label="Close">
                    <svg width="13" height="13"><path d="M1.500 1.500L11.500 11.500M11.500 1.500L1.500 11.500" stroke="#111" stroke-width="4"/><path d="M1.500 1.500L11.500 11.500M11.500 1.500L1.500 11.500" stroke="#fff" stroke-width="2"/></svg>
                </button>
            </div>
        </section>
    </main>

    <footer class="statusbar">
        <span class="hint">Select components by clicking.</span>
        <span>Role: Architectural Checking</span>
        <span>Selected: 114</span>
    </footer>
</body>
</html>
```
FILE: styles.css
```css
* {
    margin: 0;
    padding: 0;
    box-sizing: border-box;
}

body {
    display: flex;
    flex-direction: column;
    min-height: 100vh;
    font-family: 'Noto Sans', 'Open Sans', sans-serif;
    font-size: 12px;
    color: #000;
    background: linear-gradient(#f0f0f0 103px, #cacaca);
}

button {
    display: flex;
    align-items: center;
    justify-content: center;
    border: none;
    background: none;
    font: inherit;
    color: inherit;
}

a {
    color: inherit;
    text-decoration: none;
}

svg {
    flex-shrink: 0;
}

.sprite {
    position: absolute;
    width: 0;
    height: 0;
}

/* Top menu */
.menubar {
    display: flex;
    align-items: center;
    height: 60px;
    padding: 0 25px 2px 17px;
    background: #232e46;
    color: #a9b7d6;
    font-size: 13px;
}

.logo {
    display: flex;
    margin-right: 30px;
}

.menu {
    display: flex;
    gap: 29px;
}

.menu a {
    line-height: 18px;
    border-bottom: 1px solid transparent;
}

.menu .current {
    color: #fcbf23;
    border-bottom-color: #fcbf23;
}

.menu .todo {
    color: #fcbf23;
}

.add-view {
    margin-left: 32px;
}

.menu-right {
    gap: 24px;
    margin-left: auto;
}

.help {
    width: 21px;
    height: 21px;
    margin-left: 24px;
    border-radius: 50%;
    background: #e1e5eb;
    color: #0a6ed8;
    font-size: 16px;
    font-weight: 700;
}

/* Toolbar */
.toolbar {
    display: flex;
    align-items: center;
    height: 43px;
    padding: 0 5px 0 2px;
    background: #fff;
    border-bottom: 1px solid #d4d4d4;
}

.tool {
    width: 38px;
    height: 38px;
    border-radius: 4px;
}

.cubes {
    width: 39px;
}

.view-dir {
    margin-left: 2px;
}

.grid-tool {
    width: 35px;
}

.active {
    background: linear-gradient(135deg, #e8e8e8, #cfcfcf);
    border-radius: 4px;
}

.marked {
    position: relative;
}

.marked::after {
    content: '';
    position: absolute;
    inset: -1px -6px;
    border: 3px solid #f04848;
    border-radius: 6px;
    box-shadow: 0 3px 5px rgba(0, 0, 0, 0.4), inset 0 3px 4px rgba(0, 0, 0, 0.3);
}

.tool-text {
    gap: 8px;
    height: 38px;
    padding: 0 4px 0 5px;
}

.tool-text span {
    margin-right: -5px;
}

.tool-caret {
    gap: 6px;
    height: 38px;
    padding: 0 5px;
}

.sep {
    width: 1px;
    height: 33px;
    margin: 0 4px;
    background: #d0d0d0;
}

.search {
    display: flex;
    align-items: center;
    width: 307px;
    height: 28px;
    margin-left: auto;
    padding: 0 9px 0 6px;
    border: 1px solid #ccc;
    border-radius: 4px;
}

.search input {
    flex: 1;
    min-width: 0;
    border: none;
    outline: none;
    background: none;
    font: inherit;
}

.search input::placeholder {
    color: #757575;
}

.search label {
    display: flex;
}

/* Side panels */
.workspace {
    display: flex;
    flex: 1;
}

.sidebar {
    display: flex;
    flex-direction: column;
    gap: 14px;
    width: 446px;
    padding: 14px 0 0 14px;
}

.panel {
    display: flex;
    flex-direction: column;
    flex: 1 1 0;
    border: 1px solid #d4d4d4;
    background: #f9fbfa;
}

.panel-head {
    display: flex;
    align-items: center;
    gap: 5px;
    height: 36px;
    padding: 0 7px 0 8px;
}

.basket-head {
    height: 34px;
    padding-top: 2px;
}

h2 {
    font-size: 13px;
    font-weight: 400;
}

.panel-tools {
    display: flex;
    align-items: center;
    margin-left: auto;
}

.mini {
    width: 22px;
    height: 22px;
}

.mini svg {
    width: 14px;
    height: 14px;
}

.mini:disabled {
    color: #999;
}

.panel-tools .maximize {
    margin-left: 4px;
}

.mini-sep {
    width: 1px;
    height: 17px;
    margin: 0 3px;
    background: #d0d0d0;
}

.basket-tools {
    display: flex;
    align-items: center;
    justify-content: flex-end;
    height: 28px;
    padding: 0 8px 6px;
}

.basket-tools select {
    appearance: none;
    border: none;
    background: none;
    color: #aaadb2;
    font: inherit;
}

.set-caret {
    width: 12px;
    height: 7px;
    margin: 0 2px 0 3px;
}

.tree {
    flex: 1;
    list-style: none;
    background: repeating-linear-gradient(#fff 0 22px, #f9fbfa 22px 44px);
}

.tree li {
    display: flex;
    align-items: center;
    height: 22px;
    padding-left: 5px;
}

.tree .child {
    padding-left: 23px;
}

.tree .selected {
    background: #dfe3e8;
}

.tree button svg {
    width: 6px;
    height: 8px;
}

.folder {
    width: 16px;
    height: 14px;
    margin: 0 4px 0 9px;
}

/* 3D view */
.viewport {
    position: relative;
    display: grid;
    flex: 1;
    min-width: 0;
}

.building {
    grid-area: 1 / 1;
    width: 100%;
    height: 100%;
}

.viewport-head {
    grid-area: 1 / 1;
    align-self: start;
    display: flex;
    align-items: center;
    gap: 5px;
    padding: 21px 22px 0 22px;
}

.viewport-head .maximize {
    margin-left: auto;
}

.minimap {
    position: absolute;
    right: 19px;
    bottom: 4px;
    width: 100px;
    height: 100px;
    background: #d5d5d5;
    border-left: 1px solid #e4e4e4;
    border-top: 1px solid #e4e4e4;
}

.minimap span {
    position: absolute;
    top: 2px;
    right: 13px;
}

.minimap button {
    position: absolute;
    top: 1px;
    right: 1px;
}

.statusbar {
    display: flex;
    align-items: center;
    gap: 48px;
    height: 31px;
    padding: 0 176px 0 21px;
}

.hint {
    margin-right: auto;
}
```
